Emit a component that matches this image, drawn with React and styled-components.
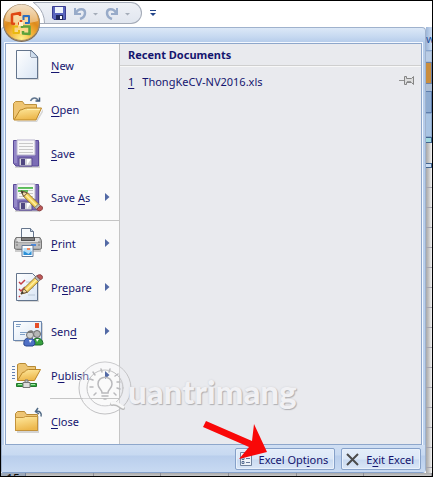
import React from "react";
import styled, { createGlobalStyle, css } from "styled-components";

const GlobalStyle = createGlobalStyle`
  *, *::before, *::after { box-sizing: border-box; }
  body { margin: 0; font-family: "Noto Sans", "Open Sans", sans-serif; font-size: 11px; color: #15156f; }
  button { font: inherit; color: inherit; cursor: default; }
`;

const Window = styled.div`
  display: flex;
  flex-direction: column;
  min-height: 100vh;
  border: 1px solid #000;
  background: #fff;
  overflow: hidden;
`;

const TitleBar = styled.header`
  position: relative;
  display: flex;
  align-items: flex-start;
  height: 26px;
  padding: 1px 0 0 32px;
`;

const OrbButton = styled.button`
  position: absolute;
  left: 1px;
  top: 2px;
  z-index: 3;
  width: 40px;
  height: 40px;
  padding: 0;
  border: 0;
  background: none;
  svg { display: block; }
`;

const QuickAccess = styled.nav`
  position: relative;
  overflow: hidden;
  display: flex;
  align-items: center;
  height: 22px;
  width: 109px;
  padding-left: 18px;
  border: 1px solid #a4abb8;
  border-left: 0;
  border-radius: 0 11px 11px 0;
  background: linear-gradient(#eef1f6, #e1e6ef);
  &::before {
    content: "";
    position: absolute;
    left: -38px;
    top: -5px;
    width: 50px;
    height: 50px;
    border: 1px solid #a4abb8;
    border-radius: 50%;
    background: #fff;
  }
`;

const ToolButton = styled.button`
  display: flex;
  align-items: center;
  justify-content: center;
  flex: none;
  width: ${(p) => p.$width}px;
  height: 22px;
  padding: 0;
  border: 0;
  background: none;
`;

const Main = styled.main`
  display: flex;
  flex: 1;
`;

const Menu = styled.section`
  position: relative;
  flex: 1;
  min-width: 0;
  display: flex;
  flex-direction: column;
  padding: 0 3px;
  border: 1px solid #9fb2cd;
  border-bottom-color: #87a3cc;
  border-radius: 3px 4px 4px 2px;
  background: linear-gradient(#dce8f7 0, #c8daf1 8px, #b4cbea 15px, #bed3ef 100%);
`;

const MenuTop = styled.div`
  height: 15px;
`;

const MenuBody = styled.div`
  flex: 1;
  display: grid;
  grid-template-columns: 114px 1fr;
  border: 1px solid #8ea7cb;
  outline: 1px solid #f3f8ff;
`;

const Commands = styled.nav`
  display: flex;
  flex-direction: column;
  background: #fafafa;
  border-right: 1px solid #c5c5c5;
`;

const Command = styled.button`
  display: grid;
  grid-template-columns: 32px 1fr 6px;
  column-gap: 7px;
  align-items: center;
  height: 44px;
  padding: 0 8px 2px 6px;
  border: 0;
  background: none;
  text-align: left;
  white-space: nowrap;
  svg { display: block; }
`;

const Separator = styled.hr`
  width: 69px;
  height: 2px;
  margin: 0 0 0 auto;
  border: 0;
  border-top: 1px solid #c5c5c5;
`;

const Key = styled.span`
  text-decoration: underline;
  text-underline-offset: 2px;
`;

const Recent = styled.section`
  background: #e9eaee;
`;

const RecentTitle = styled.h2`
  height: 22px;
  margin: 0;
  padding-left: 8px;
  border-bottom: 1px solid #cfcfcf;
  box-shadow: 0 1px #f8f8f8;
  font-size: 11px;
  line-height: 22px;
  font-weight: 700;
`;

const RecentList = styled.ul`
  margin: 0;
  padding: 5px 6px 0 8px;
  list-style: none;
`;

const RecentItem = styled.li`
  display: flex;
  align-items: center;
  height: 20px;
  button { display: flex; padding: 0; border: 0; background: none; }
`;

const Document = styled.a`
  flex: 1;
  color: inherit;
  text-decoration: none;
  white-space: nowrap;
  ${Key} { margin-right: 8px; }
`;

const Footer = styled.footer`
  display: flex;
  align-items: center;
  justify-content: flex-end;
  gap: 6px;
  height: 27px;
  margin: 0 -3px;
  padding: 1px 4px 0;
  background: linear-gradient(#d0dff3 0, #c7d9f1 10px, #b9ceec 11px, #c8daf2 100%);
`;

const FooterButton = styled.button`
  display: flex;
  align-items: center;
  gap: 7px;
  height: 22px;
  padding: 0 6px 0 4px;
  border: 1px solid #86a1c9;
  border-radius: 2px;
  background: linear-gradient(#e4edf9 0, #dce8f7 10px, #c9daf1 11px, #dbe7f7 100%);
  box-shadow: inset 0 0 0 1px #e9f1fb;
  white-space: nowrap;
`;

const overlay = css`
  position: absolute;
  pointer-events: none;
`;

const Watermark = styled.div`
  ${overlay}
  left: 75px;
  top: 332px;
  display: flex;
  align-items: flex-start;
  color: #f1f1f4;
  font: 900 33px/62px Lato, sans-serif;
  text-shadow: 1px 1px 1px #b0b0b4, 0 0 2px #d0d0d4;
  svg { flex: none; margin-right: -5px; }
`;

const Arrow = styled.svg`
  ${overlay}
  right: 158px;
  bottom: 12px;
`;

const SheetEdge = styled.aside`
  width: 6px;
  display: flex;
  flex-direction: column;
  background: linear-gradient(90deg, #a8a8a8, #c8c8c8 3px, #f4f4f4);
  overflow: hidden;
`;

const RibbonTab = styled.div`
  height: 24px;
  border-bottom: 1px solid #86a4cf;
  background: linear-gradient(90deg, #9db6d8, #cbdcf2);
  color: #24509a;
  line-height: 24px;
`;

const RibbonPiece = styled.div`
  height: ${(p) => p.$height}px;
  border: solid ${(p) => p.$line};
  border-width: 1px 1px 1px 0;
  background: ${(p) => p.$fill};
`;

const SheetRows = styled.div`
  flex: 1;
  background: repeating-linear-gradient(transparent 0, transparent 19px, #a6a6b0 19px, #a6a6b0 20px);
`;

const SheetBottom = styled.div`
  display: flex;
  height: 3px;
  overflow: hidden;
  background: linear-gradient(#a9a9a9, #c8c8c8);
`;

const RowNumber = styled.div`
  width: 25px;
  border-right: 1px solid #75829a;
  color: #101010;
  background: #9da8b7;
  font-size: 12px;
  line-height: 12px;
  text-align: center;
`;

const BottomCell = styled.div`
  flex: 1;
  border-right: 1px solid #8f8f96;
`;

function Picture({ children }) {
  return <svg width="32" height="32" viewBox="0 0 32 32" aria-hidden="true">{children}</svg>;
}

function Floppy() {
  return (
    <>
      <path d="M3 5h25v26H3z" fill="#d4d4d4" />
      <path d="M1.500 3.500h25v25.500H4l-2.500-2.500z" fill="#7b6cb5" stroke="#5a4a98" />
      <path d="M2 4h3v22H2z" fill="#9488c8" />
      <path d="M5 3h18v15H5z" fill="#f8f8f8" stroke="#b9b5ce" />
      <path d="M7 6.500h14M7 9.500h14M7 12.500h14M7 15.500h14" stroke="#c9c9c9" />
      <path d="M7 21h13v8H7z" fill="#d5d5dc" stroke="#58498f" />
      <path d="M9 22h4v6H9z" fill="#4f4681" />
      <path d="M15 22h4l-4 6z" fill="#fff" />
    </>
  );
}

function Pencil({ transform }) {
  return (
    <g transform={transform}>
      <path d="M0 0l3 6 13 13 4-4L7 2z" fill="#f5d45d" stroke="#8d6c24" />
      <path d="M4 3l14 14" stroke="#fff0a4" strokeWidth="1.500" />
      <path d="M0 0l3 6 4-4z" fill="#efd6a8" stroke="#5e4930" />
      <path d="M0 0l1.500 3L3 1z" fill="#333" />
      <path d="M15 18l4-4 2 2-4 4z" fill="#b8b8b8" stroke="#777" />
      <path d="M17 20l4-4c2 0 3 2 2 4s-4 2-6 0z" fill="#bd5959" stroke="#873c3c" />
    </g>
  );
}

const pictures = {
  new: (
    <Picture>
      <path d="M6 3h16l5 6v22H6z" fill="#d8d8d8" />
      <path d="M4.500 1.500h15l6 6v22h-21z" fill="url(#paper)" stroke="#63748c" />
      <path d="M19 1.500V8h6.500" fill="#9bb2cf" stroke="#40526d" />
      <path d="M19 2l6 6h-6z" fill="#cfddec" />
    </Picture>
  ),
  open: (
    <Picture>
      <path d="M4 28h20l7-12v3l-6 10H6z" fill="#d6d6d6" />
      <path d="M1.500 26.500V10.500l2-2h7l2 3h12v5" fill="#efc572" stroke="#bd913d" />
      <path d="M2 27l6-10c3 0 4-2 7-2h14.500l-5.500 12z" fill="url(#folder)" stroke="#ba8628" />
      <path d="M15 16.500h13" stroke="#fff0b3" />
      <path d="M18.500 8c2-4 6-4 8 0" fill="none" stroke="#60758e" strokeWidth="1.500" />
      <path d="M23.500 8h4V4.500" fill="none" stroke="#405a78" strokeWidth="1.500" />
    </Picture>
  ),
  save: <Picture><Floppy /></Picture>,
  saveAs: (
    <Picture>
      <Floppy />
      <path d="M6 7h15M6 10h10" stroke="#35b335" strokeWidth="1.500" />
      <Pencil transform="translate(9 10) scale(.92)" />
    </Picture>
  ),
  print: (
    <Picture>
      <path d="M3 25h26v-3H3z" fill="#ccc" />
      <path d="M9.500 14V1.500h9l3 3V14" fill="#f6f9fc" stroke="#65758c" />
      <path d="M18.500 1.500v3h3" fill="#c7d5e4" stroke="#65758c" />
      <path d="M4 10.500h24l1.500 3v8l-2 1H4.500l-2-1v-8z" fill="#a9a9a9" stroke="#777" />
      <path d="M5 11h22l1 4H4z" fill="#dedede" />
      <path d="M9 10h14v4H9z" fill="#525252" />
      <path d="M10 12h12" stroke="#aaa" />
      <path d="M3 16h26v5H3z" fill="#bdbdbd" />
      <path d="M5 14v5M27 14v5" stroke="#777" strokeDasharray="2 1" />
      <path d="M19 17h5v2h-5z" fill="#4a88dd" />
      <path d="M10 18.500h11v11H10z" fill="#fff" stroke="#667b98" />
      <path d="M11.500 21h8v7h-8z" fill="#b3dcf7" />
      <path d="M11.500 28v-4l2 1 3 2 3-3v4z" fill="#2d91d8" />
      <path d="M15 21h3v2h-3z" fill="#ee8960" />
    </Picture>
  ),
  prepare: (
    <Picture>
      <path d="M6 5h21v26H6z" fill="#d7d7d7" />
      <path d="M4.500 2.500h16l5 5v22h-21z" fill="url(#paper)" stroke="#63748c" />
      <path d="M14 11h6M14 17h8M16 24h7" stroke="#bac7d6" />
      <path d="M7 11l2 2 4-4M7 18l2 2 4-4M7 25l1 1" fill="none" stroke="#c33e46" strokeWidth="1.500" />
      <Pencil transform="translate(9 23) scale(.92 -.9)" />
    </Picture>
  ),
  send: (
    <Picture>
      <path d="M3 8h28v19H3z" fill="#d3d3d3" />
      <path d="M1.500 6.500h28v19h-28z" fill="url(#paper)" stroke="#6b86ad" />
      <path d="M4 9.500h5M4 11.500h4M8 17.500h8M8 19.500h5" stroke="#7f9fc5" />
      <path d="M23 8h4v5h-4z" fill="#e64e29" />
      <path d="M20 30c-1-9 11-9 11-1l-2 1z" fill="#37a13d" stroke="#1b6a2b" />
      <path d="M12 30c-2-9 11-10 11-1l-2 2h-7z" fill="#4f70c5" stroke="#29458d" />
      <circle cx="25" cy="19" r="3.500" fill="#b5b5b5" stroke="#686868" />
      <circle cx="18" cy="20" r="3.500" fill="#cecece" stroke="#707070" />
      <path d="M15 18c1-3 5-4 7-1l-2 1z" fill="#777" />
      <path d="M17 25l1 3 2-3M24 24l1 3 2-3" fill="#fff" />
    </Picture>
  ),
  publish: (
    <Picture>
      <path d="M0 7.500h3M0 10.500h3M0 13.500h3M0 16.500h3M0 19.500h3" stroke="#6480b0" />
      <path d="M5.500 21.500V5.500l2-1h6l2 3h8v6" fill="#edc572" stroke="#b78a34" />
      <path d="M5.500 21.500l5-8c3 0 3-3 6-3h12l-6 11z" fill="url(#folder)" stroke="#ba8628" />
      <path d="M13 21h3v4h-3z" fill="#c1c1c1" stroke="#777" />
      <path d="M4.500 24.500h20v3h-20z" fill="#36aa43" stroke="#24762d" />
      <path d="M11 23.500h7v5h-7z" fill="#ddd" stroke="#777" />
      <path d="M6 25.500h4M19 25.500h4" stroke="#a2e8a6" />
    </Picture>
  ),
  close: (
    <Picture>
      <path d="M5 11h22v17H5z" fill="#d3d3d3" />
      <path d="M3.500 25.500V8.500l2-2h7l2 3h11v16z" fill="#eec574" stroke="#b88a36" />
      <path d="M3.500 12.500h8l2-1h12v14h-22z" fill="url(#folder)" stroke="#c3923b" />
      <path d="M26 3l-2.500 3.500L27 9M24 6.500c4-1 6 2 5 5" fill="none" stroke="#506984" strokeWidth="1.500" />
    </Picture>
  ),
};

const commands = [
  { icon: "new", before: "", key: "N", after: "ew" },
  { icon: "open", before: "", key: "O", after: "pen" },
  { icon: "save", before: "", key: "S", after: "ave" },
  { icon: "saveAs", before: "Save ", key: "A", after: "s", more: true, divider: true },
  { icon: "print", before: "", key: "P", after: "rint", more: true },
  { icon: "prepare", before: "Pr", key: "e", after: "pare", more: true },
  { icon: "send", before: "Sen", key: "d", after: "", more: true },
  { icon: "publish", before: "P", key: "u", after: "blish", more: true, divider: true },
  { icon: "close", before: "", key: "C", after: "lose" },
];

function OfficeOrb() {
  return (
    <svg width="40" height="40" viewBox="0 0 40 40" aria-hidden="true">
      <defs>
        <radialGradient id="orb" cx=".5" cy=".95" r=".8">
          <stop offset="0" stopColor="#fff08c" />
          <stop offset=".4" stopColor="#f3b53a" />
          <stop offset=".7" stopColor="#dd8a1c" />
          <stop offset="1" stopColor="#e8a850" />
        </radialGradient>
        <linearGradient id="shine" x2="0" y2="1">
          <stop stopColor="#f5efe6" />
          <stop offset="1" stopColor="#edbf80" />
        </linearGradient>
        <linearGradient id="paper" x2="1" y2="1">
          <stop stopColor="#fff" />
          <stop offset="1" stopColor="#d9e5f4" />
        </linearGradient>
        <linearGradient id="folder" x2=".3" y2="1">
          <stop stopColor="#ffeaa0" />
          <stop offset="1" stopColor="#edb84d" />
        </linearGradient>
      </defs>
      <circle cx="19.500" cy="20.500" r="18.500" fill="#7d6a52" />
      <circle cx="19.500" cy="19.500" r="18" fill="url(#orb)" stroke="#a08a6c" />
      <path d="M3 18C4-4 35-4 36 18c-9 3-24 3-33 0z" fill="url(#shine)" opacity=".8" />
      <path d="M11 11h9v4h8v16H12V21H9z" fill="#ffe9b8" opacity=".6" />
      <g fill="none" strokeLinejoin="round">
        <path d="M18 13v-3l-8 1.500v9l3 .5M16 20.500h3V17" stroke="#df4813" strokeWidth="2.500" />
        <path d="M21.500 17v-4H27v7h-4" stroke="#2b6fc2" strokeWidth="2" />
        <path d="M16 23.500h-4.500V30H17v-3" stroke="#e9b911" strokeWidth="2" />
        <path d="M20 25v-1.500h7.500V31l-6.500-.5V28" stroke="#5da23a" strokeWidth="2.500" />
      </g>
      <path d="M17 19h4v4h-4z" fill="#fff0c8" />
    </svg>
  );
}

function UndoIcon({ redo }) {
  return (
    <svg width="14" height="14" viewBox="0 0 14 14" aria-hidden="true">
      <g transform={redo ? "translate(14 0) scale(-1 1)" : undefined}>
        <path d="M2 2v6h6" fill="none" stroke="#98abc9" strokeWidth="2" />
        <path d="M3 7c2-5 9-5 9 0 0 3-2 5-5 6" fill="none" stroke="#98abc9" strokeWidth="2.500" />
      </g>
    </svg>
  );
}

function SmallArrow({ color = "#a5adb9", bar }) {
  return (
    <svg width="6" height="7" viewBox="0 0 6 7" aria-hidden="true">
      {bar && <path d="M0 .5h6" stroke={color} />}
      <path d={bar ? "M0 3h6L3 6z" : "M0 3h5L2.500 5.500z"} fill={color} />
    </svg>
  );
}

export default function App() {
  return (
    <Window>
      <GlobalStyle />
      <TitleBar>
        <OrbButton aria-label="Office Button"><OfficeOrb /></OrbButton>
        <QuickAccess aria-label="Quick Access Toolbar">
          <ToolButton $width={15} aria-label="Save">
            <svg width="14" height="14" viewBox="0 0 14 14" aria-hidden="true">
              <path d="M.5.5h13v13H2L.5 12z" fill="#5965bd" stroke="#3a3d91" />
              <path d="M3 1h8v6H3z" fill="#edf3fb" />
              <path d="M4 9h7v5H4z" fill="#20285b" />
              <path d="M8 10h2v3H8z" fill="#fff" />
            </svg>
          </ToolButton>
          <ToolButton $width={27} aria-label="Undo"><UndoIcon /></ToolButton>
          <ToolButton $width={6} aria-label="Undo history"><SmallArrow /></ToolButton>
          <ToolButton $width={26} aria-label="Redo"><UndoIcon redo /></ToolButton>
          <ToolButton $width={6} aria-label="Redo history"><SmallArrow /></ToolButton>
        </QuickAccess>
        <ToolButton $width={22} aria-label="Customize toolbar"><SmallArrow color="#23458a" bar /></ToolButton>
      </TitleBar>
      <Main>
        <Menu>
          <MenuTop />
          <MenuBody>
            <Commands aria-label="Office menu">
              {commands.map((c) => (
                <React.Fragment key={c.icon}>
                  <Command>
                    {pictures[c.icon]}
                    <span>{c.before}<Key>{c.key}</Key>{c.after}</span>
                    {c.more && (
                      <svg width="5" height="8" viewBox="0 0 5 8" aria-hidden="true">
                        <path d="M0 0l4.500 4L0 8z" fill="#5269a5" />
                      </svg>
                    )}
                  </Command>
                  {c.divider && <Separator />}
                </React.Fragment>
              ))}
            </Commands>
            <Recent>
              <RecentTitle>Recent Documents</RecentTitle>
              <RecentList>
                <RecentItem>
                  <Document href="#document"><Key>1</Key>ThongKeCV-NV2016.xls</Document>
                  <button aria-label="Pin document">
                    <svg width="16" height="10" viewBox="0 0 16 10" aria-hidden="true">
                      <path d="M0 4.500h5" stroke="#929292" />
                      <path d="M5.500.5v8h2v-2h5l2 2v-8l-2 2h-5v-2z" fill="#ddd" stroke="#858585" />
                      <path d="M8 5.500h4" stroke="#999" />
                    </svg>
                  </button>
                </RecentItem>
              </RecentList>
            </Recent>
          </MenuBody>
          <Footer>
            <FooterButton>
              <svg width="12" height="14" viewBox="0 0 12 14" aria-hidden="true">
                <path d="M.5.5h11v13H.5z" fill="#eff3f8" stroke="#71839e" />
                <path d="M2 5.500h2v2H2zM2 9.500h2v2H2z" fill="#fff" stroke="#536b91" />
                <path d="M6 6.500h4M6 10.500h4" stroke="#67799a" />
              </svg>
              <span>Excel Opt<Key>i</Key>ons</span>
            </FooterButton>
            <FooterButton>
              <svg width="13" height="13" viewBox="0 0 13 13" aria-hidden="true">
                <path d="M1 1l11 11M12 1L1 12" stroke="#4c4c4c" strokeWidth="2" />
              </svg>
              <span>E<Key>x</Key>it Excel</span>
            </FooterButton>
          </Footer>
          <Watermark>
            <svg width="56" height="56" viewBox="0 0 56 56" aria-hidden="true">
              <g fill="none" strokeLinecap="round">
                <g stroke="#c1c1c3">
                  <circle cx="28" cy="28" r="26" />
                  <circle cx="28" cy="28" r="18" />
                </g>
                <circle cx="28" cy="27" r="22" stroke="#f4f4f5" strokeWidth="6" opacity=".35" />
                <path d="M35 44c6-1 7 2 11 4" stroke="#bbb" strokeWidth="4" />
                <path d="M35 43c6-1 7 2 11 4" stroke="#f8f8f8" strokeWidth="3" />
                <path d="M25 33c0-4-4-4-4-9 0-9 14-9 14 0 0 5-4 5-4 9zM25 36h6M27 39h2M16 20l-3-1M18 15l-2-3M25 12l-1-3M32 12l1-3M38 16l3-2M40 22h3M40 28l3 1M37 33l2 2M16 27h-3M19 33l-2 2" stroke="#b9b9bc" strokeWidth="1.500" />
              </g>
            </svg>
            <span>uantrimang</span>
          </Watermark>
          <Arrow width="64" height="40" viewBox="0 0 64 40" aria-hidden="true">
            <path d="M3 1L0 7l46 20-10 12 28-7L51 4l-2 17z" fill="#f90808" />
          </Arrow>
        </Menu>
        <SheetEdge aria-hidden="true">
          <RibbonTab>w</RibbonTab>
          <RibbonPiece $height={11} $line="#a9bdd8" $fill="#b9cce5" />
          <RibbonPiece $height={22} $line="#6d83a7" $fill="#c98d3e" />
          <RibbonPiece $height={7} $line="#a9bdd8" $fill="#adbdd2" />
          <RibbonPiece $height={22} $line="#5d7dac" $fill="#8facd1" />
          <RibbonPiece $height={24} $line="#8ca8cb" $fill="#a8c3e2" />
          <RibbonPiece $height={6} $line="#426590" $fill="#9fd7dd" />
          <RibbonPiece $height={20} $line="transparent" $fill="transparent" />
          <RibbonPiece $height={5} $line="#426590" $fill="#cbdcf2" />
          <SheetRows />
        </SheetEdge>
      </Main>
      <SheetBottom aria-hidden="true">
        <RowNumber>15</RowNumber>
        {[0, 1, 2, 3, 4, 5].map((n) => <BottomCell key={n} />)}
      </SheetBottom>
    </Window>
  );
}
